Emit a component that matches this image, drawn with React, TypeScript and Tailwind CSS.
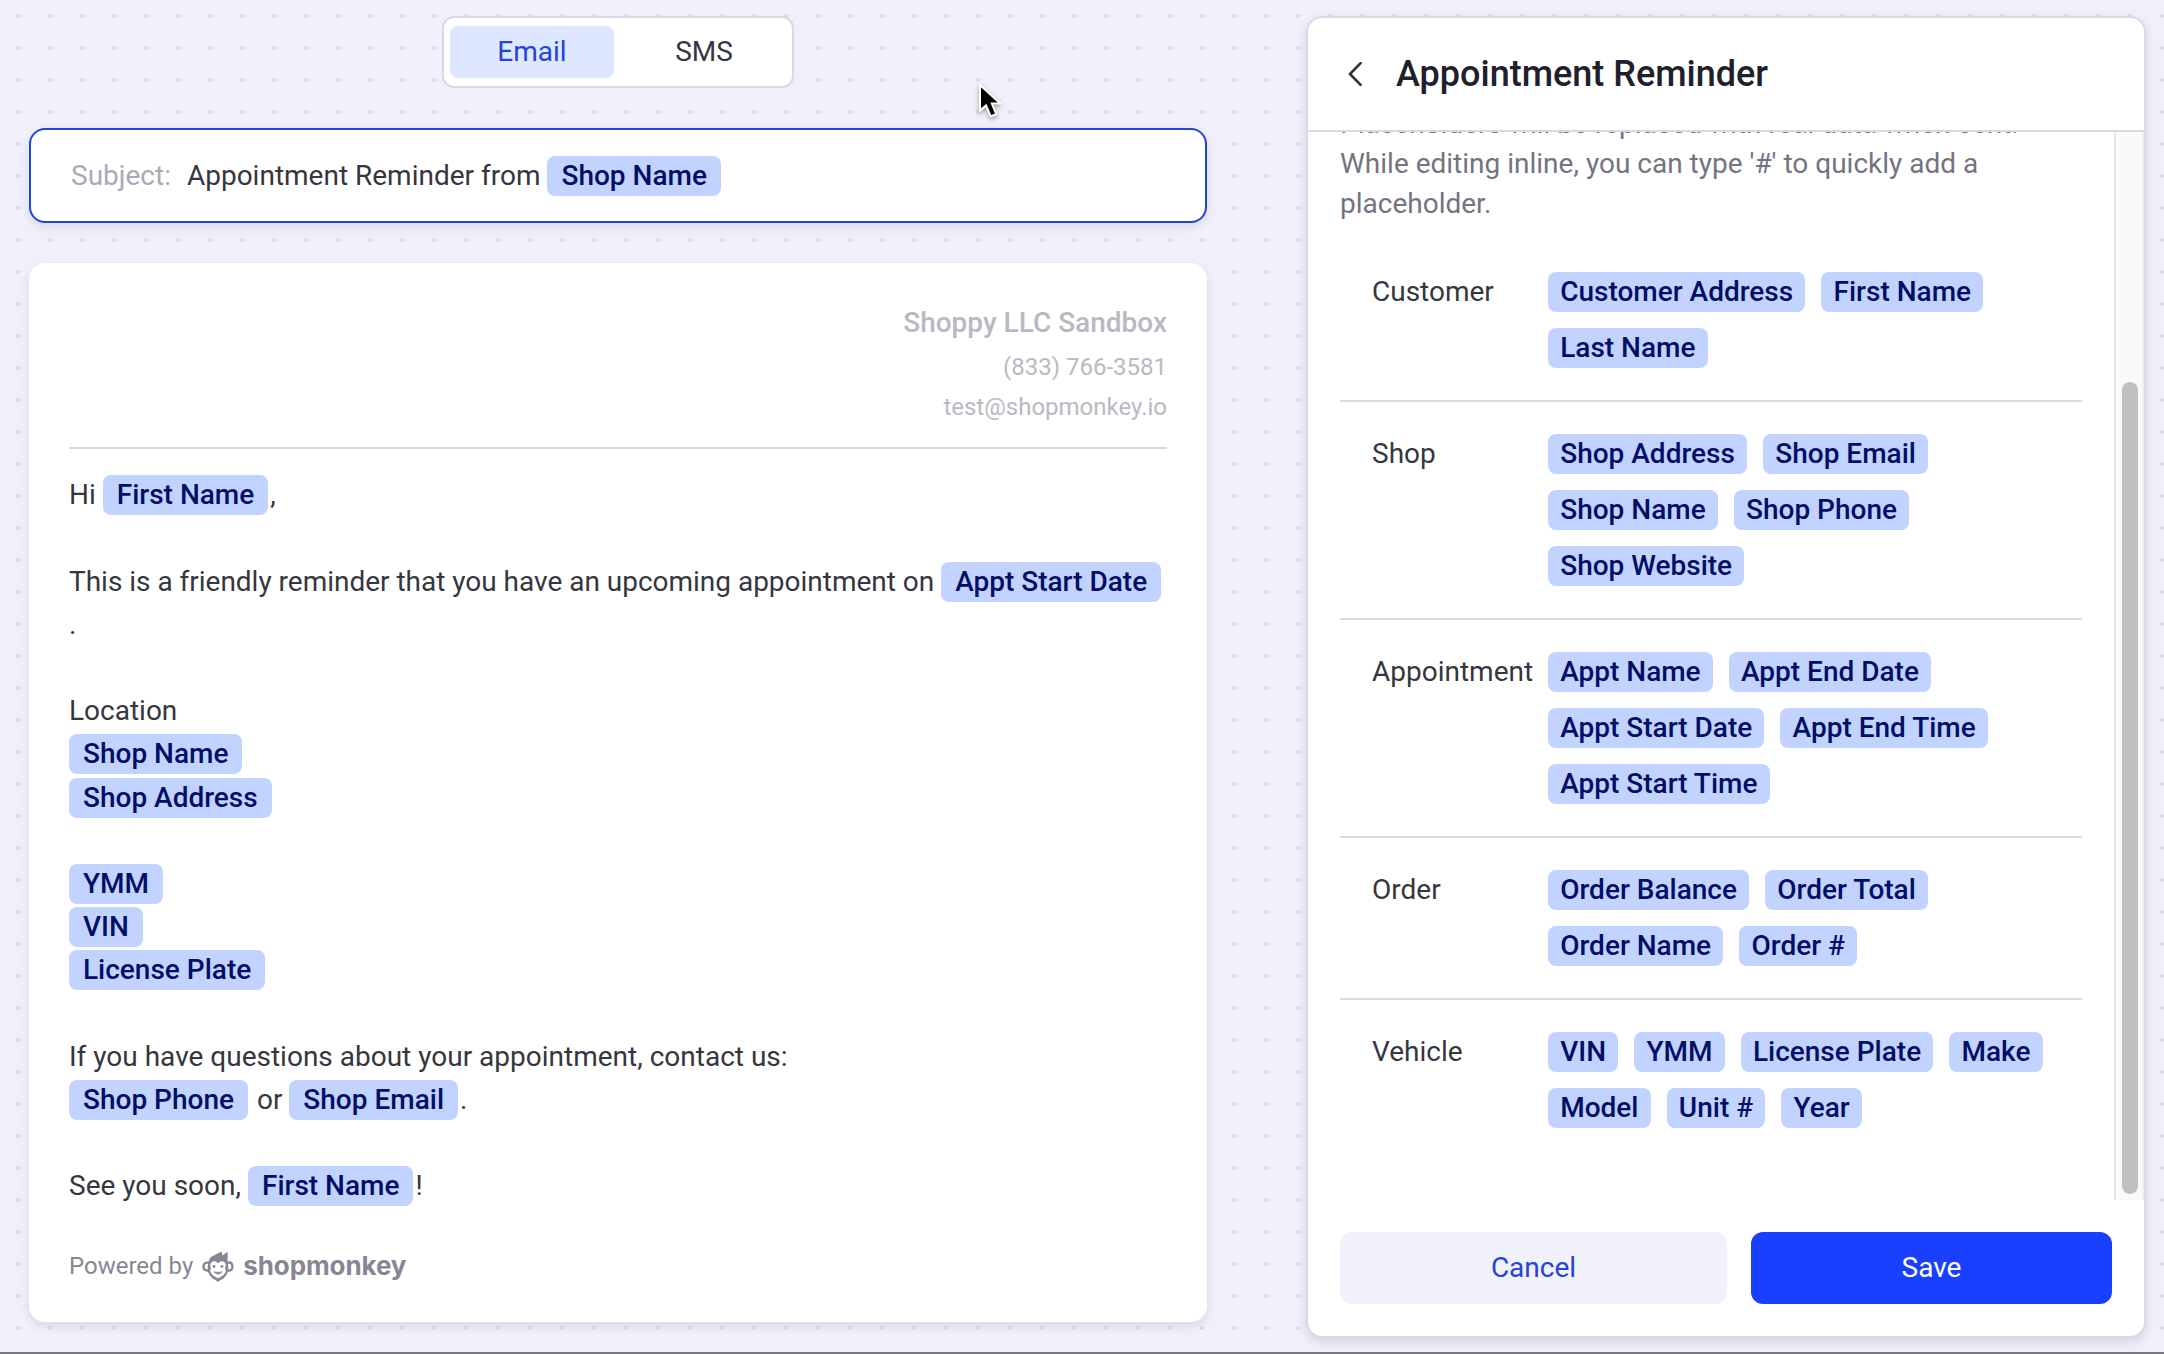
import type { ReactNode } from "react";

const groups: { label: string; rows: string[][] }[] = [
  { label: "Customer", rows: [["Customer Address", "First Name"], ["Last Name"]] },
  { label: "Shop", rows: [["Shop Address", "Shop Email"], ["Shop Name", "Shop Phone"], ["Shop Website"]] },
  {
    label: "Appointment",
    rows: [["Appt Name", "Appt End Date"], ["Appt Start Date", "Appt End Time"], ["Appt Start Time"]],
  },
  { label: "Order", rows: [["Order Balance", "Order Total"], ["Order Name", "Order #"]] },
  { label: "Vehicle", rows: [["VIN", "YMM", "License Plate", "Make"], ["Model", "Unit #", "Year"]] },
];

function InlineTag({ children }: { children: ReactNode }) {
  return (
    <span className="mr-[2px] inline-block h-10 rounded-lg bg-[#c2d3ff] px-[14px] leading-10 font-medium whitespace-nowrap text-[#020f66]">
      {children}
    </span>
  );
}

function PanelTag({ children }: { children: ReactNode }) {
  return (
    <button className="h-10 rounded-lg bg-[#c2d3ff] px-[12.2px] leading-10 font-medium whitespace-nowrap text-[#020f66]">
      {children}
    </button>
  );
}

function MonkeyLogo() {
  return (
    <svg className="h-[31px] w-8" viewBox="0 0 96 92" fill="none">
      <path
        fill="#868694"
        d="M20 31 L22 24 Q24 18 31 15 L59 1 L61 13 L77 2 L77 31 Q94 28 95 46 Q94 63 78 62 Q75 74 65 81 L48 92 L31 81 Q21 74 18 62 Q1 62 1 46 Q2 29 20 31 Z"
      />
      <path
        fill="#fff"
        d="M48 37 Q42 28 33 31 Q24 34 25 45 Q25 49 27 51 Q24 56 25 62 Q28 73 48 81 Q68 73 71 62 Q72 56 69 51 Q71 49 71 45 Q72 34 63 31 Q54 28 48 37 Z"
      />
      <path fill="#fff" d="M18 38 Q8 37 8 46 Q8 55 17 55 Z M78 38 Q88 37 88 46 Q88 55 79 55 Z" />
      <circle cx="36" cy="46" r="4.2" fill="#868694" />
      <circle cx="60" cy="46" r="4.2" fill="#868694" />
      <path d="M36 62 Q48 76 60 62 Q48 65 36 62 Z" fill="#868694" stroke="#868694" strokeWidth="2" strokeLinejoin="round" />
    </svg>
  );
}

function ChannelToggle() {
  return (
    <div className="flex h-[72px] w-[352px] gap-2 self-center rounded-xl border-2 border-[#d7d9e4] bg-white px-1.5 py-2">
      <button className="h-[52px] flex-1 rounded-lg bg-[#dde7ff] text-[#2643d9]">Email</button>
      <button className="h-[52px] flex-1 rounded-lg text-[#36363f]">SMS</button>
    </div>
  );
}

function SubjectField() {
  return (
    <div className="mt-10 flex h-[95px] gap-4 rounded-2xl border-2 border-[#2643d9] bg-white pt-[26px] pl-10 leading-10 shadow-[0_4px_10px_rgba(40,40,80,0.10)]">
      <span className="text-[#aaaab7]">Subject:</span>
      <span>
        Appointment Reminder from <InlineTag>Shop Name</InlineTag>
      </span>
    </div>
  );
}

function EmailCard() {
  return (
    <div className="mt-10 h-[1059px] rounded-2xl bg-white px-10 pt-10 shadow-[0_4px_10px_rgba(40,40,80,0.12)]">
      <div className="border-b-2 border-[#d7d7e1] pb-5 text-right text-[24px] leading-10 text-[#b9b9c2]">
        <p className="mb-1 text-[28px] font-medium">Shoppy LLC Sandbox</p>
        <p>(833) 766-3581</p>
        <p>test@shopmonkey.io</p>
      </div>
      <div className="pt-[24.2px] leading-[43.2px]">
        <p>
          Hi <InlineTag>First Name</InlineTag>,
        </p>
        <br />
        <p>
          <span className="tracking-[-0.014px]">
            This is a friendly reminder that you have an upcoming appointment on{" "}
          </span>
          <InlineTag>Appt Start Date</InlineTag>
          <br />.
        </p>
        <br />
        <p>Location</p>
        <p>
          <InlineTag>Shop Name</InlineTag>
        </p>
        <p>
          <InlineTag>Shop Address</InlineTag>
        </p>
        <br />
        <p>
          <InlineTag>YMM</InlineTag>
        </p>
        <p>
          <InlineTag>VIN</InlineTag>
        </p>
        <p>
          <InlineTag>License Plate</InlineTag>
        </p>
        <br />
        <p>If you have questions about your appointment, contact us:</p>
        <p>
          <InlineTag>Shop Phone</InlineTag> or <InlineTag>Shop Email</InlineTag>.
        </p>
        <br />
        <p>
          See you soon, <InlineTag>First Name</InlineTag>!
        </p>
      </div>
      <div className="mt-[40.4px] flex h-9 items-center text-[24px] leading-9 text-[#868694]">
        <span>Powered by</span>
        <span className="ml-[9px]">
          <MonkeyLogo />
        </span>
        <span className="ml-[9px] font-[Inter] text-[26px] font-bold tracking-[-0.1px]">shopmonkey</span>
      </div>
    </div>
  );
}

function SidePanel() {
  return (
    <aside className="mt-4 flex h-[1322px] w-[840px] flex-col overflow-hidden rounded-2xl border-2 border-[#d7d9e4] bg-white shadow-[0_4px_10px_rgba(40,40,80,0.14)]">
      <header className="flex h-[114px] shrink-0 items-center border-b-2 border-[#d7d9e4] pl-10">
        <svg className="h-6 w-[14px]" viewBox="0 0 14 24" fill="none" stroke="#32323c" strokeWidth="2.6">
          <path d="M12.6 1.2 L2 12 L12.6 22.8" strokeLinecap="round" strokeLinejoin="round" />
        </svg>
        <h1 className="ml-[34px] text-[36px] leading-[48px] font-medium text-[#20202b]">Appointment Reminder</h1>
      </header>
      <div className="flex h-[1068px] shrink-0 overflow-hidden">
        <div className="w-[806px] px-8">
          <p className="-mt-[28px] mb-4 leading-10 whitespace-nowrap text-[#747480]">
            Placeholders will be replaced with real data when sent.
            <br />
            While editing inline, you can type '#' to quickly add a
            <br />
            placeholder.
          </p>
          <div className="divide-y-2 divide-[#d7d9e4]">
            {groups.map((group) => (
              <section key={group.label} className="flex py-8 pl-8 leading-10">
                <h2 className="w-44 shrink-0">{group.label}</h2>
                <div className="flex flex-col gap-4">
                  {group.rows.map((row) => (
                    <div key={row[0]} className="flex gap-4">
                      {row.map((tag) => (
                        <PanelTag key={tag}>{tag}</PanelTag>
                      ))}
                    </div>
                  ))}
                </div>
              </section>
            ))}
          </div>
        </div>
        <div className="w-[30px] border-r-2 border-l-2 border-r-[#efeff0] border-l-[#e6e6e8] bg-[#fafafa] pt-[250px] pl-1.5">
          <div className="h-[812px] w-4 rounded-full bg-[#c1c1c1]" />
        </div>
      </div>
      <footer className="flex gap-6 px-8 pt-8">
        <button className="h-[72px] w-[387px] rounded-xl bg-[#f0f1fa] text-[#2643d9]">Cancel</button>
        <button className="h-[72px] w-[361px] rounded-xl bg-[#1a3fff] text-white">Save</button>
      </footer>
    </aside>
  );
}

export default function App() {
  return (
    <div className="relative flex h-[1354px] w-[2164px] justify-between overflow-hidden border-b-2 border-[#77777f] bg-[#f0f0fb] bg-[radial-gradient(circle_at_16px_16px,#dadbe4_1.7px,transparent_2.2px)] bg-[length:32px_32px] bg-[position:2px_0] pr-[18px] pl-[29px] font-['Roboto',sans-serif] text-[28px] text-[#36363f]">
      <main className="flex w-[1178px] flex-col pt-4">
        <ChannelToggle />
        <SubjectField />
        <EmailCard />
      </main>
      <SidePanel />
      <svg
        className="absolute top-[82px] left-[977px] h-10 w-8 drop-shadow-[0_2px_2px_rgba(0,0,0,0.35)]"
        viewBox="0 0 32 40"
      >
        <path
          d="M3 3 L3 28.5 L9 23.5 L13.7 34.5 L19.2 32.2 L14.8 21.5 L23 21.3 Z"
          fill="#000"
          stroke="#fff"
          strokeWidth="2"
          strokeLinejoin="miter"
        />
      </svg>
    </div>
  );
}
